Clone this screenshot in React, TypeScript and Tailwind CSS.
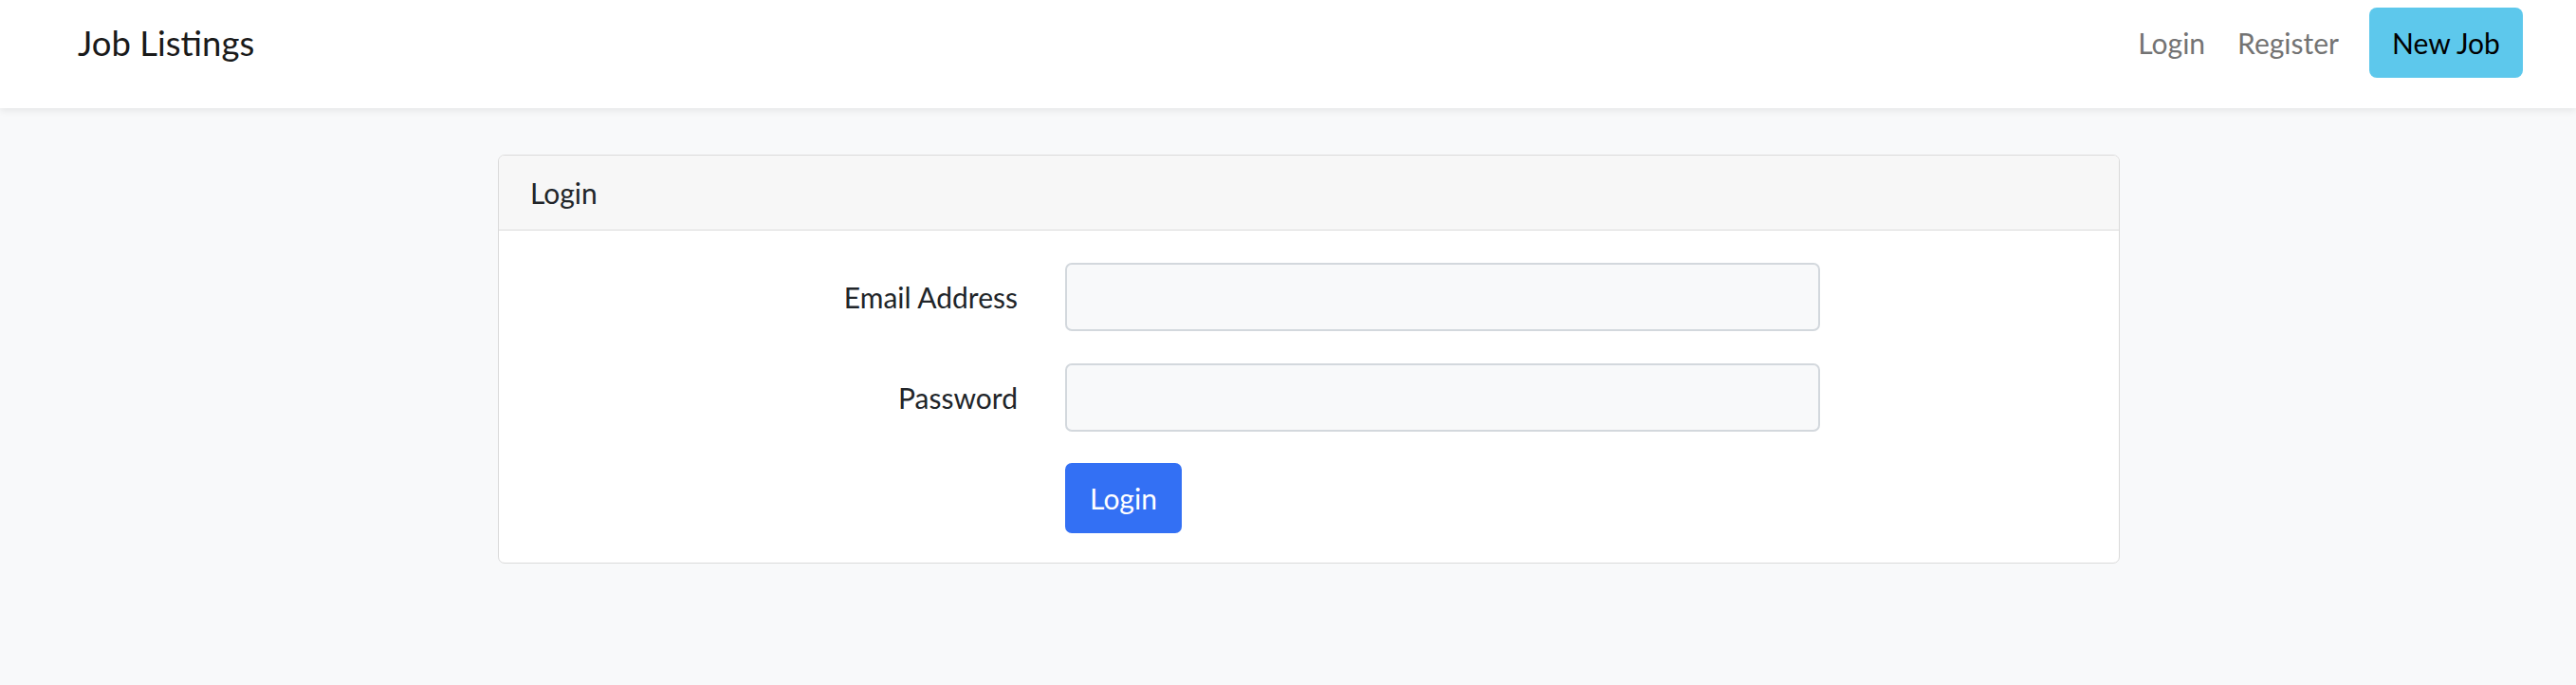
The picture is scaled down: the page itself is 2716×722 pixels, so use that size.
export default function App() {
    return (
        <div className="min-h-screen bg-[#f8f9fa] text-[#212529]" style={{ fontFamily: "Lato, 'Noto Sans', sans-serif" }}>
            <nav className="h-[114px] bg-white shadow-[0_3px_7px_rgba(0,0,0,0.075)] flex items-start justify-between pl-[82px] pr-[56px] pt-[8px]">
                <div className="h-[74px] flex items-center">
                    <a href="#" className="text-[36.5px] text-[#1a1a1a] leading-none">
                        Job Listings
                    </a>
                </div>
                <div className="h-[74px] flex items-center">
                    <a href="#" className="text-[30px] text-[#737373] mr-[34px]">Login</a>
                    <a href="#" className="text-[30px] text-[#737373] mr-[32px]">Register</a>
                    <button className="w-[162px] h-[74px] rounded-[8px] bg-[#5dc8ec] text-[30px] text-black">
                        New Job
                    </button>
                </div>
            </nav>

            <main className="pt-[49px] pl-[525px]">
                <div className="w-[1710px] bg-white border border-[#dadada] rounded-[7px] overflow-hidden">
                    <div className="h-[79px] bg-[#f7f7f7] border-b border-[#dadada] flex items-center pl-[33px] text-[30px]">
                        Login
                    </div>
                    <form className="pt-[34px] pb-[31px]" onSubmit={(e) => e.preventDefault()}>
                        <div className="flex items-center mb-[34px]">
                            <label className="w-[547px] text-right text-[30px]">Email Address</label>
                            <input type="email" className="ml-[50px] w-[796px] h-[72px] rounded-[7px] border-2 border-[#d3d8dd] bg-[#f8f9fa] px-[21px] text-[28px] outline-none" />
                        </div>
                        <div className="flex items-center mb-[33px]">
                            <label className="w-[547px] text-right text-[30px]">Password</label>
                            <input type="password" className="ml-[50px] w-[796px] h-[72px] rounded-[7px] border-2 border-[#d3d8dd] bg-[#f8f9fa] px-[21px] text-[28px] outline-none" />
                        </div>
                        <div className="flex">
                            <button type="submit" className="ml-[597px] w-[123px] h-[74px] rounded-[7px] bg-[#3370f4] text-white text-[30px]">
                                Login
                            </button>
                        </div>
                    </form>
                </div>
            </main>
        </div>
    )
}
